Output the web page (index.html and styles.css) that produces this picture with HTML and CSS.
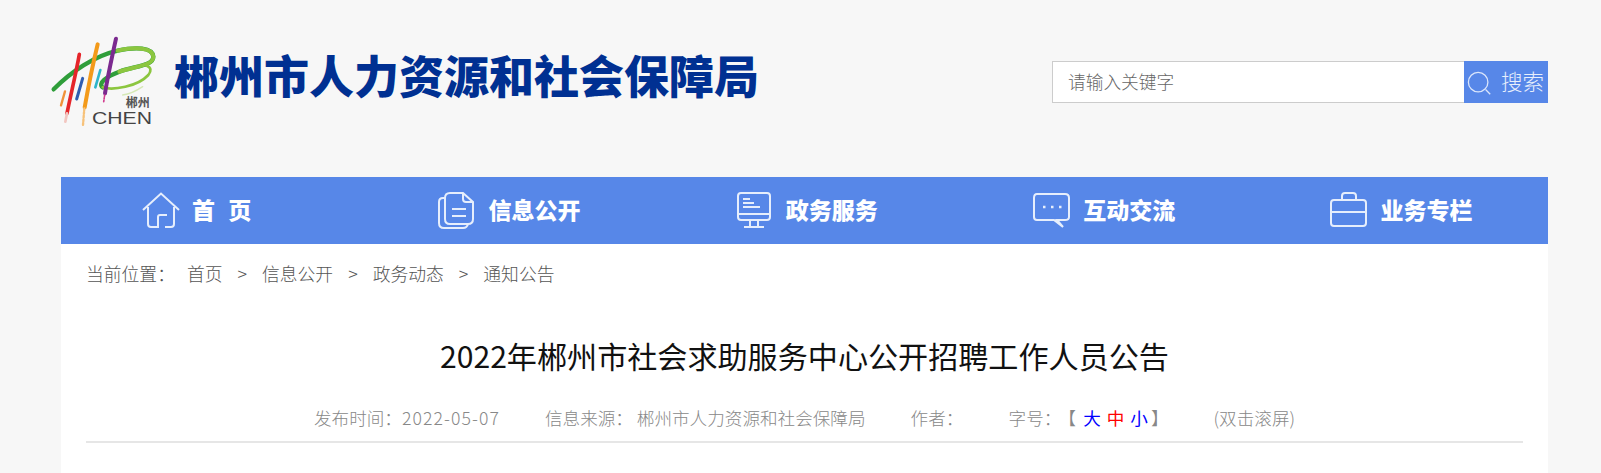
FILE: index.html
```html
<!DOCTYPE html>
<html lang="zh-CN">

<head>
    <meta charset="UTF-8">
    <meta name="viewport" content="width=device-width, initial-scale=1.0">
    <title>2022年郴州市社会求助服务中心公开招聘工作人员公告</title>
    <link rel="stylesheet" href="styles.css">
</head>

<body>
    <div class="wrap">
        <header class="header">
            <svg class="logo" viewBox="0 0 390 315" fill="none" stroke-linecap="round">
                <path d="M38 178C90 125 160 78 230 62C285 50 335 52 337 80C338 108 280 108 235 125C195 140 170 160 185 172" stroke="#2f9e3a" stroke-width="13"/>
                <path d="M230 62C285 50 335 52 337 80C338 108 280 108 235 125" stroke="#8cc63f" stroke-width="12"/>
                <path d="M185 172C215 182 290 170 322 135C332 122 330 112 318 108" stroke="#8cc63f" stroke-width="8"/>
                <path d="M245 195C270 192 290 180 305 170" stroke="#d5e8b5" stroke-width="4"/>
                <path d="M115 73C105 130 90 190 78 250" stroke="#e5252a" stroke-width="11"/>
                <path d="M78 250L73 275" stroke="#f2c6c0" stroke-width="8"/>
                <path d="M170 43C155 105 142 170 131 232" stroke="#f39a1a" stroke-width="12"/>
                <path d="M130 235L126 285" stroke="#f7c27a" stroke-width="7" stroke-dasharray="6 5"/>
                <path d="M225 26C212 85 200 140 192 190" stroke="#7b2a8f" stroke-width="12"/>
                <path d="M191 195L188 216" stroke="#d23d8f" stroke-width="5" stroke-dasharray="4 4"/>
                <path d="M125 145L107 207" stroke="#2f5cb0" stroke-width="9"/>
                <path d="M178 120L163 172" stroke="#2fb5c9" stroke-width="8"/>
                <path d="M72 184L60 226" stroke="#f0923a" stroke-width="7"/>
                <text class="logo-cn" x="254" y="231">郴州</text>
                <text class="logo-en" x="153" y="282" textLength="180" lengthAdjust="spacingAndGlyphs">CHEN</text>
            </svg>
            <h1 class="site-name">郴州市人力资源和社会保障局</h1>
            <form class="search">
                <input class="search-input" type="text" placeholder="请输入关键字">
                <button class="search-btn" type="button">
                    <svg class="search-icon" viewBox="0 0 28 28" fill="none" stroke="#dbe6fb" stroke-width="1.4">
                        <circle cx="12" cy="12" r="10.5"/>
                        <path d="M20 20L25 25"/>
                    </svg>
                    <span>搜索</span>
                </button>
            </form>
        </header>

        <nav class="nav">
            <a class="nav-item nav-home">
                <svg class="nav-icon" viewBox="0 0 38 37">
                    <path d="M1 18L19 1.500L37 18M6 15V32Q6 35 9 35H16V25Q16 23 18 23H25M32 15V32Q32 35 29 35H23"/>
                </svg>
                <span>首&nbsp;页</span>
            </a>
            <a class="nav-item">
                <svg class="nav-icon" viewBox="0 0 38 37">
                    <path d="M8 6H6Q2 6 2 10V31Q2 36 7 36H26Q30 36 31 32"/>
                    <path d="M8 6Q8 1 13 1H26L36 10V27Q36 32 31 32H13Q8 32 8 27ZM26 1V7Q26 10 29 10H36"/>
                    <path d="M15 17H29M15 24H29"/>
                </svg>
                <span>信息公开</span>
            </a>
            <a class="nav-item">
                <svg class="nav-icon" viewBox="0 0 38 37">
                    <path d="M6 1H32Q35 1 35 4V25Q35 28 32 28H6Q3 28 3 25V4Q3 1 6 1ZM3 22H35M15 28V34M23 28V34M9 35H29M8 7H15M8 11H19M8 15H25"/>
                </svg>
                <span>政务服务</span>
            </a>
            <a class="nav-item">
                <svg class="nav-icon" viewBox="0 0 38 37">
                    <path d="M5 2H33Q37 2 37 6V25Q37 28 33 28H25L31 35L22 28H5Q2 28 2 25V6Q2 2 5 2Z"/>
                    <path class="nav-dots" d="M11 15H13.500M19 15H21.500M27 15H29.500"/>
                </svg>
                <span>互动交流</span>
            </a>
            <a class="nav-item">
                <svg class="nav-icon" viewBox="0 0 38 37">
                    <path d="M4 8H33Q36 8 36 11V31Q36 34 33 34H4Q1 34 1 31V11Q1 8 4 8ZM1 20H36M12 8V4Q12 1 15 1H23Q26 1 26 4V8"/>
                </svg>
                <span>业务专栏</span>
            </a>
        </nav>

        <main class="content">
            <div class="crumbs">
                <span class="crumbs-label">当前位置：</span>
                <a>首页</a><i>&gt;</i><a>信息公开</a><i>&gt;</i><a>政务动态</a><i>&gt;</i><a>通知公告</a>
            </div>
            <h2 class="title">2022年郴州市社会求助服务中心公开招聘工作人员公告</h2>
            <div class="meta">
                <span class="meta-item">发布时间：<span class="meta-date">2022-05-07</span></span>
                <span class="meta-item">信息来源：&nbsp;郴州市人力资源和社会保障局</span>
                <span class="meta-item meta-author">作者：</span>
                <span class="meta-item meta-size">字号：<span class="bracket-l">【</span><a class="size-blue size-first">大</a><a class="size-red">中</a><a class="size-blue size-last">小</a>】</span>
                <span class="meta-item">(双击滚屏)</span>
            </div>
        </main>
    </div>
</body>

</html>
```

FILE: styles.css
```css
body {
    background-color: #f7f7f7;
    margin: 0;
    height: 473px;
    overflow: hidden;
    font-family: "Noto Sans CJK SC", "Liberation Sans", sans-serif;
}

.wrap {
    width: 1487px;
    margin-left: 61px;
}

.header {
    display: flex;
    align-items: flex-start;
    height: 177px;
}

.logo {
    flex: none;
    width: 130px;
    height: 105px;
    margin: 30px 3px 0 -20px;
}

.logo-cn {
    font-size: 36px;
    font-weight: 700;
    fill: #555;
}

.logo-en {
    font-family: "Liberation Sans", sans-serif;
    font-size: 48px;
    fill: #444;
}

.site-name {
    margin: 41px 0 0;
    font-size: 45px;
    line-height: 68px;
    font-weight: 900;
    color: #003092;
}

.search {
    display: flex;
    margin: 61px 0 0 auto;
    height: 42px;
}

.search-input {
    width: 412px;
    box-sizing: border-box;
    height: 42px;
    padding: 0 15px 3px;
    border: 1px solid #ccc;
    border-right: none;
    background-color: #fff;
    font-family: inherit;
    font-size: 17.700px;
    font-weight: 300;
    outline: none;
}

.search-input::placeholder {
    color: #666;
}

.search-btn {
    display: flex;
    align-items: center;
    width: 84px;
    padding: 0 0 3px 3px;
    border: none;
    background-color: #5787e8;
    color: #e8effc;
    font-family: inherit;
    font-size: 21.500px;
    font-weight: 300;
}

.search-icon {
    width: 26px;
    height: 26px;
    margin-top: 6px;
    margin-right: 8px;
}

.nav {
    display: grid;
    grid-template-columns: repeat(5, 1fr);
    height: 67px;
    background-color: #5787e8;
}

.nav-item {
    display: flex;
    align-items: center;
    padding: 0 0 4px 79px;
    color: #fff;
    font-size: 23px;
    font-weight: 900;
}

.nav-home {
    padding-left: 81px;
    word-spacing: 8px;
}

.nav-home .nav-icon {
    margin-right: 12px;
}

.nav-icon {
    flex: none;
    width: 38px;
    height: 37px;
    margin: 4px 13px 0 0;
    fill: none;
    stroke: #e6eefc;
    stroke-width: 2;
}

.nav-dots {
    stroke-width: 2.600;
}

.content {
    height: 229px;
    padding: 0 25px;
    background-color: #fff;
}

.crumbs {
    display: flex;
    align-items: center;
    box-sizing: border-box;
    height: 64px;
    padding-bottom: 6px;
    color: #555;
    font-size: 17.800px;
    font-weight: 300;
}

.crumbs-label {
    margin-right: 12px;
}

.crumbs i {
    margin: 0 15px;
    font-style: normal;
}

.title {
    margin: 24px 0 0;
    font-size: 30.100px;
    line-height: 46px;
    font-weight: 400;
    color: #111;
    text-align: center;
}

.meta {
    display: flex;
    justify-content: center;
    margin-top: 19px;
    height: 44px;
    line-height: 42px;
    border-bottom: 2px solid #e6e6e6;
    color: #888;
    font-size: 17.600px;
    font-weight: 300;
}

.meta-item {
    margin-right: 45px;
}

.meta-item:last-child {
    margin-right: 0;
}

.meta-date {
    letter-spacing: 1.100px;
}

.meta-author {
    width: 53px;
}

.bracket-l {
    margin-left: 6px;
}

.size-blue {
    color: #00f;
    margin: 0 3px;
    font-weight: 400;
}

.size-red {
    color: #f00;
    margin: 0 3px;
    font-weight: 400;
}

.size-first {
    margin-left: 7px;
}

.size-last {
    margin-right: 3px;
}
```
